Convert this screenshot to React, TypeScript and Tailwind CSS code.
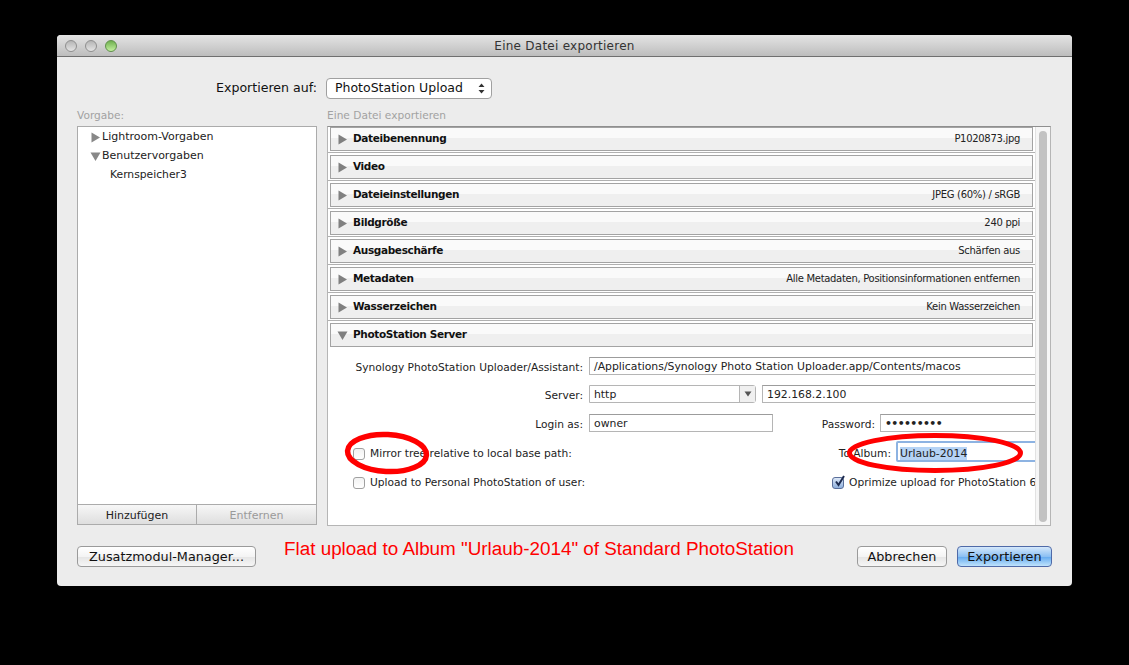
import React from "react"

const sections = [
  { name: "Dateibenennung", info: "P1020873.jpg" },
  { name: "Video", info: "" },
  { name: "Dateieinstellungen", info: "JPEG (60%) / sRGB" },
  { name: "Bildgröße", info: "240 ppi" },
  { name: "Ausgabeschärfe", info: "Schärfen aus" },
  { name: "Metadaten", info: "Alle Metadaten, Positionsinformationen entfernen" },
  { name: "Wasserzeichen", info: "Kein Wasserzeichen" },
]

const Triangle = ({ open = false, color = "#808080" }: { open?: boolean; color?: string }) => (
  <svg width="11" height="11" viewBox="0 0 11 11" className="shrink-0">
    {open ? <path d="M0.5 1.5h10L5.5 10z" fill={color} /> : <path d="M1.5 0.5v10L10 5.5z" fill={color} />}
  </svg>
)

const SectionHeader = ({ name, info, open = false }: { name: string; info?: string; open?: boolean }) => (
  <div className="h-6 mx-[2px] flex items-center pl-[6px] pr-[12px] border border-[#a3a3a3] bg-[linear-gradient(#fafafa_0,#fafafa_45%,#efefef_45%,#efefef_100%)]">
    <Triangle open={open} />
    <span className="ml-[5px] text-[10.5px] tracking-[-0.35px] font-bold text-[#111]">{name}</span>
    <span className="ml-auto -mt-[1px] text-[10px] tracking-[-0.3px] text-[#222]">{info}</span>
  </div>
)

const TextBox = ({ value, className = "" }: { value: string; className?: string }) => (
  <div className={`h-[18px] shrink-0 border border-[#b5b5b5] border-t-[#9c9c9c] bg-white pl-[4px] text-[10.85px] leading-[17px] text-[#222] whitespace-nowrap overflow-hidden ${className}`}>
    {value}
  </div>
)

const Checkbox = ({ checked = false }: { checked?: boolean }) => (
  <span className={`relative mt-[3px] w-[12px] h-[12px] shrink-0 rounded-[3px] border ${checked ? "border-[#5a6f9a] bg-[linear-gradient(#dce7f7,#8fb0dd)]" : "border-[#a0a0a0] bg-[linear-gradient(#f2f2f2,#ffffff)]"}`}>
    {checked && (
      <svg width="14" height="14" viewBox="0 0 14 14" className="absolute left-[0px] top-[-4px]">
        <path d="M3 7.5l2.5 3.5L11 2" fill="none" stroke="#1d2b4f" strokeWidth="2" />
      </svg>
    )}
  </span>
)

const Label = ({ children }: { children: React.ReactNode }) => (
  <span className="block pt-[3px] text-[10.65px] leading-[16px] text-[#222] whitespace-nowrap">{children}</span>
)

const MacButton = ({ children, className = "" }: { children: React.ReactNode; className?: string }) => (
  <button className={`mt-[9px] h-[21px] shrink-0 rounded-[4px] border border-[#9a9a9a] bg-[linear-gradient(#ffffff,#f4f4f4_50%,#e6e6e6_55%,#f6f6f6)] text-[12.8px] leading-[19px] text-[#111] ${className}`}>
    {children}
  </button>
)

export default function App() {
  return (
    <div className="relative w-[1129px] h-[665px] bg-black pt-[35px] pl-[57px] overflow-hidden font-['DejaVu_Sans',sans-serif]">
      <div className="w-[1015px] h-[551px] rounded-[4px] bg-[#ececec] flex flex-col overflow-hidden">
        {/* title bar */}
        <div className="h-[22px] shrink-0 flex items-center relative border-b border-[#6f6f6f] bg-[linear-gradient(#e4e4e4,#bdbdbd)]">
          <div className="flex gap-[8px] pl-[8px]">
            <span className="w-[12px] h-[12px] rounded-full border border-[#8f8f8f] bg-[linear-gradient(#b5b5b5,#e4e4e4)]" />
            <span className="w-[12px] h-[12px] rounded-full border border-[#8f8f8f] bg-[linear-gradient(#b5b5b5,#e4e4e4)]" />
            <span className="w-[12px] h-[12px] rounded-full border border-[#5f8f4a] bg-[linear-gradient(#6fb04e,#c4f0a0)]" />
          </div>
          <span className="absolute inset-x-0 text-center text-[12px] tracking-[0.25px] text-[#333]">Eine Datei exportieren</span>
        </div>

        {/* export target */}
        <div className="flex items-center mt-[20px] ml-[159px] h-[22px]">
          <span className="w-[101px] text-[12.6px] text-[#111] whitespace-nowrap">Exportieren auf:</span>
          <div className="ml-[9px] w-[166px] h-[21px] rounded-[4px] border border-[#a0a0a0] bg-white flex items-center pl-[8px] pr-[6px]">
            <span className="text-[12.5px] text-[#111]">PhotoStation Upload</span>
            <svg width="7" height="11" viewBox="0 0 7 11" className="ml-auto">
              <path d="M3.5 0.5L6.5 4h-6zM3.5 10.5L6.5 7h-6z" fill="#333" />
            </svg>
          </div>
        </div>

        {/* captions */}
        <div className="flex mt-[9px] ml-[20px] h-[14px] text-[10.6px] leading-[14px] text-[#a2a2a2]">
          <span className="w-[250px]">Vorgabe:</span>
          <span>Eine Datei exportieren</span>
        </div>

        {/* panels */}
        <div className="flex gap-[10px] mt-[4px] ml-[20px]">
          <div className="w-[240px] h-[399px] flex flex-col border border-[#ababab] bg-white">
            <div className="flex-1 pt-[1px] text-[11px] text-[#222]">
              <div className="h-[19px] flex items-center pl-[12px] gap-[1px]">
                <Triangle color="#888" />
                <span>Lightroom-Vorgaben</span>
              </div>
              <div className="h-[19px] flex items-center pl-[12px] gap-[1px]">
                <Triangle open color="#888" />
                <span>Benutzervorgaben</span>
              </div>
              <div className="h-[19px] flex items-center pl-[32px] text-[10.75px]">Kernspeicher3</div>
            </div>
            <div className="h-[20px] flex border-t border-[#ababab] text-[11px] bg-[linear-gradient(#f7f7f7,#dedede)]">
              <div className="w-[119px] text-center leading-[21px] text-[#222] border-r border-[#ababab]">Hinzufügen</div>
              <div className="flex-1 text-center leading-[21px] text-[#9a9a9a]">Entfernen</div>
            </div>
          </div>

          <div className="w-[724px] h-[400px] flex border border-[#b5b5b5] border-t-[#8f8f8f] bg-white overflow-hidden">
            <div className="w-[707px] shrink-0 overflow-hidden">
              <div className="flex flex-col">
                {sections.map((s) => (
                  <div key={s.name} className="pb-[1px] mb-[2px] border-b border-[#b0b0b0]">
                    <SectionHeader name={s.name} info={s.info} />
                  </div>
                ))}
                <SectionHeader name="PhotoStation Server" open />
              </div>

              {/* form */}
              <div className="flex flex-col w-[707px] overflow-hidden">
                <div className="flex items-center mt-[10px] h-[18px]">
                  <div className="w-[261px] shrink-0 pr-[6px] text-right"><Label>Synology PhotoStation Uploader/Assistant:</Label></div>
                  <TextBox value="/Applications/Synology Photo Station Uploader.app/Contents/macos" className="w-[500px]" />
                </div>
                <div className="flex items-center mt-[10px] h-[18px]">
                  <div className="w-[261px] shrink-0 pr-[6px] text-right"><Label>Server:</Label></div>
                  <div className="w-[167px] h-[18px] shrink-0 flex border border-[#b5b5b5] rounded-r-[3px] bg-white">
                    <span className="flex-1 pl-[4px] text-[10.85px] leading-[17px] text-[#222]">http</span>
                    <span className="w-[16px] border-l border-[#b5b5b5] bg-[#f0f0f0] flex items-center justify-center">
                      <svg width="8" height="6" viewBox="0 0 8 6"><path d="M0.5 0.5h7L4 5.5z" fill="#555" /></svg>
                    </span>
                  </div>
                  <TextBox value="192.168.2.100" className="ml-[6px] w-[320px]" />
                </div>
                <div className="flex items-center mt-[11px] h-[18px]">
                  <div className="w-[261px] shrink-0 pr-[6px] text-right"><Label>Login as:</Label></div>
                  <TextBox value="owner" className="w-[184px]" />
                  <div className="w-[107px] shrink-0 pr-[5px] text-right"><Label>Password:</Label></div>
                  <TextBox value="•••••••••" className="w-[220px] font-bold tracking-[-0.6px]" />
                </div>
                <div className="flex items-center mt-[9px] h-[21px]">
                  <div className="ml-[25px] mt-[2px] shrink-0 flex items-center gap-[5px] w-[479px]">
                    <Checkbox />
                    <Label>Mirror tree relative to local base path:</Label>
                  </div>
                  <div className="w-[64px] mt-[2px] shrink-0 pr-[5px] text-right"><Label>To Album:</Label></div>
                  <div className="h-[21px] w-[220px] shrink-0 border-2 border-[#8db3e2] rounded-[2px] bg-white pl-[2px] pt-[4px] text-[10.85px] leading-[13px] text-[#222]">
                    <span className="inline-block leading-[13px] bg-[#b5d3f5]">Urlaub-2014</span>
                  </div>
                </div>
                <div className="flex items-center mt-[10px] h-[19px]">
                  <div className="ml-[25px] shrink-0 flex items-center gap-[5px] w-[479px]">
                    <Checkbox />
                    <Label>Upload to Personal PhotoStation of user:</Label>
                  </div>
                  <div className="flex items-center gap-[5px] shrink-0">
                    <Checkbox checked />
                    <Label>Oprimize upload for PhotoStation 6</Label>
                  </div>
                </div>
              </div>
            </div>
            <div className="flex-1 border-l border-[#e2e2e2] bg-[#f6f6f6] px-[3px] pt-[4px] pb-[3px]">
              <div className="w-[8px] h-full rounded-full bg-[#c2c2c2]" />
            </div>
          </div>
        </div>

        {/* bottom buttons */}
        <div className="flex items-start mt-[11px] ml-[20px]">
          <MacButton className="w-[179px]">Zusatzmodul-Manager...</MacButton>
          <span className="ml-[28px] mt-[1px] text-[18.85px] leading-[22px] text-[#f00] font-['Liberation_Sans',sans-serif] whitespace-nowrap">
            Flat upload to Album "Urlaub-2014" of Standard PhotoStation
          </span>
          <MacButton className="ml-[63px] w-[90px]">Abbrechen</MacButton>
          <button className="mt-[9px] ml-[10px] w-[95px] h-[21px] shrink-0 rounded-[4px] border border-[#4f6aa8] bg-[linear-gradient(#d5e8fb,#8cc0f3_50%,#6aaef0_55%,#bfe3fc)] text-[12.8px] leading-[19px] text-[#111]">
            Exportieren
          </button>
        </div>
      </div>

      {/* red annotation ellipses drawn over the screenshot */}
      <svg width="1129" height="665" className="absolute left-0 top-0 pointer-events-none">
        <ellipse cx="387" cy="453" rx="39.5" ry="18.5" fill="none" stroke="#f00" strokeWidth="5.5" transform="rotate(3 387 453)" />
        <ellipse cx="935" cy="453" rx="85.5" ry="17.5" fill="none" stroke="#f00" strokeWidth="5" />
      </svg>
    </div>
  )
}
